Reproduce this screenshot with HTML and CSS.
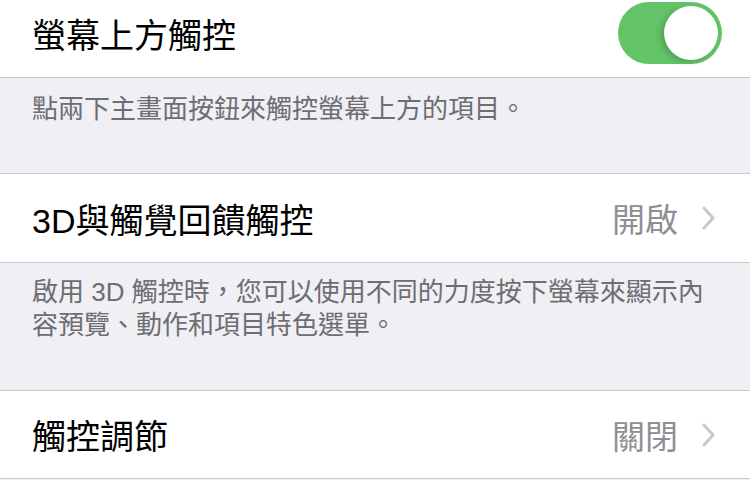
FILE: index.html
```html
<!DOCTYPE html>
<html lang="zh-Hant">
<head>
  <meta charset="UTF-8" />
  <meta name="viewport" content="width=device-width, initial-scale=1.0"/>
  <title>觸控</title>
  <link rel="stylesheet" href="styles.css">
</head>
<body>
  <div class="cell cell-first">
    <span class="cell-title">螢幕上方觸控</span>
    <div class="switch on"><div class="knob"></div></div>
  </div>
  <div class="footer footer-short">點兩下主畫面按鈕來觸控螢幕上方的項目。</div>

  <div class="cell">
    <span class="cell-title">3D與觸覺回饋觸控</span>
    <span class="cell-value">開啟</span>
    <svg class="chevron" width="13" height="24" viewBox="0 0 13 24">
      <path d="M2 2 L11 12 L2 22" fill="none" stroke="#c7c7cc" stroke-width="3" stroke-linecap="round" stroke-linejoin="round"/>
    </svg>
  </div>
  <div class="footer footer-tall">啟用 3D 觸控時，您可以使用不同的力度按下螢幕來顯示內容預覽、動作和項目特色選單。</div>

  <div class="cell">
    <span class="cell-title">觸控調節</span>
    <span class="cell-value">關閉</span>
    <svg class="chevron" width="13" height="24" viewBox="0 0 13 24">
      <path d="M2 2 L11 12 L2 22" fill="none" stroke="#c7c7cc" stroke-width="3" stroke-linecap="round" stroke-linejoin="round"/>
    </svg>
  </div>
</body>
</html>
```

FILE: styles.css
```css
body {
  margin: 0;
  background: #efeff4;
  font-family: "Liberation Sans", "Noto Sans CJK TC", sans-serif;
  overflow: hidden;
}

.cell {
  display: flex;
  align-items: center;
  height: 87px;
  padding: 0 35px 0 32px;
  background: #ffffff;
  border-top: 1px solid #c8c7cc;
  border-bottom: 1px solid #c8c7cc;
}

.cell-first {
  height: 88px;
  margin-top: -13px;
  border-top: none;
  padding-right: 28px;
  padding-top: 2px;
}

.cell:nth-of-type(3) {
  height: 88px;
}

.cell-title {
  flex: 1;
  font-size: 34px;
  color: #000;
}

.cell-value {
  font-size: 33px;
  color: #8e8e93;
  margin-right: 24px;
}

.chevron {
  display: block;
}

.footer {
  box-sizing: border-box;
  padding: 15px 28px 0 32px;
  font-size: 26px;
  line-height: 33px;
  color: #6d6d72;
}

.footer-short {
  height: 95px;
}

.footer-tall {
  height: 127px;
  padding-top: 13px;
}

.switch {
  position: relative;
  width: 104px;
  height: 62px;
  border-radius: 31px;
  background: #62c466;
}

.switch .knob {
  position: absolute;
  top: 4px;
  right: 4px;
  width: 54px;
  height: 54px;
  border-radius: 50%;
  background: #ffffff;
  box-shadow: -3px 2px 6px rgba(0, 0, 0, 0.18);
}
```
